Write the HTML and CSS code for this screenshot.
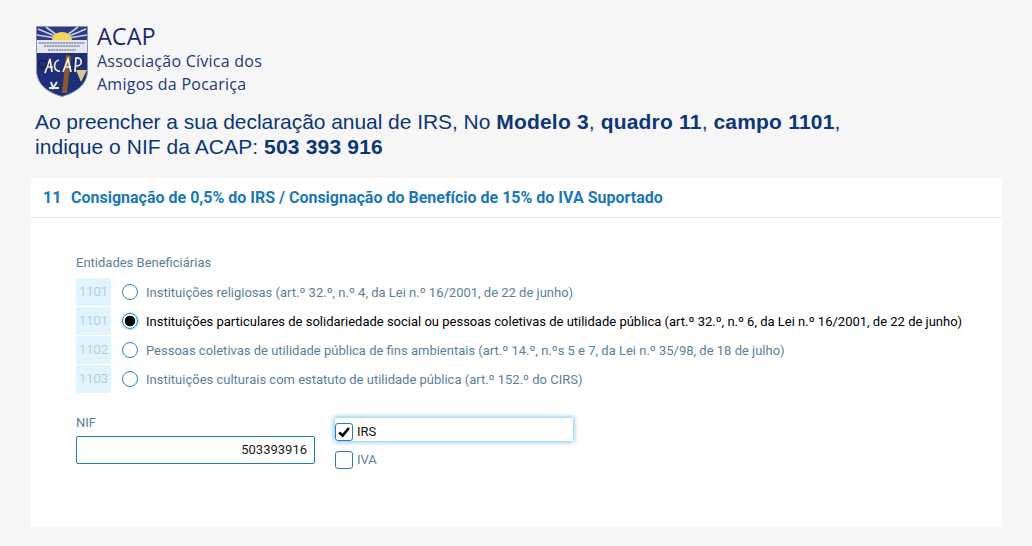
FILE: index.html
```html
<!DOCTYPE html>
<html lang="pt">
<head>
<meta charset="utf-8">
<title>ACAP</title>
<link rel="stylesheet" href="styles.css">
</head>
<body>
<header class="brand">
  <svg class="crest" viewBox="0 0 52 71" aria-hidden="true">
    <path d="M0.5 0.5H51.5V44C51.5 60 38 67 26 70.5C14 67 0.5 60 0.5 44Z" fill="#1d2f78" stroke="#8d93a8"/>
    <path d="M1 1H51V16H1Z" fill="#2a3d84"/>
    <path d="M26 13L2 3M26 13L10 1M26 13L42 1M26 13L50 3M26 13L1 9M26 13L51 9" stroke="#c9cde0" stroke-width="1.6"/>
    <path d="M16 14A10 8 0 0 1 36 14Z" fill="#f3d35a"/>
    <rect x="1" y="14" width="50" height="13" fill="#e6e7ee"/>
    <path d="M3 17H49M8 20H44M12 24H40" stroke="#4a5080" stroke-width="1.2" stroke-dasharray="2 .7"/>
    <path d="M35 30L31 67H26L30 29Z" fill="#8b5a2b"/>
    <path d="M9 47L14 33L16 46M12 41H17M23 34C17 35 17 46 24 45M27 46L32 33L35 46M29 41H35M39 46L40 32C47 31 47 40 40 40" fill="none" stroke="#f4f1de" stroke-width="1.7"/>
    <path d="M40 44H51L45 56Z" fill="#d8c98e"/>
    <circle cx="7" cy="38" r="4" fill="none" stroke="#11153a" stroke-width="1"/>
    <path d="M15 56L17 62L21 56M13 62H23" fill="none" stroke="#e9ebf3" stroke-width="2"/>
  </svg>
  <div class="brand-text">
    <div class="brand-name">ACAP</div>
    <div class="brand-sub">Associação Cívica dos</div>
    <div class="brand-sub">Amigos da Pocariça</div>
  </div>
</header>
<h1 class="notice"><span class="lead">Ao preencher a sua declaração anual de IRS, No</span> <b>Modelo 3</b>, <b>quadro 11</b>, <b>campo 1101</b>,<br>indique o NIF da ACAP: <b>503 393 916</b></h1>
<main class="card">
  <div class="card-head"><span class="num">11</span><span>Consignação de 0,5% do IRS / Consignação do Benefício de 15% do IVA Suportado</span></div>
  <div class="card-body">
    <div class="group-label">Entidades Beneficiárias</div>
    <div class="options">
      <div class="option"><span class="code">1101</span><span class="radio"></span><span>Instituições religiosas (art.º 32.º, n.º 4, da Lei n.º 16/2001, de 22 de junho)</span></div>
      <div class="option selected"><span class="code">1101</span><span class="radio"></span><span>Instituições particulares de solidariedade social ou pessoas coletivas de utilidade pública (art.º 32.º, n.º 6, da Lei n.º 16/2001, de 22 de junho)</span></div>
      <div class="option"><span class="code">1102</span><span class="radio"></span><span>Pessoas coletivas de utilidade pública de fins ambientais (art.º 14.º, n.ºs 5 e 7, da Lei n.º 35/98, de 18 de julho)</span></div>
      <div class="option"><span class="code">1103</span><span class="radio"></span><span>Instituições culturais com estatuto de utilidade pública (art.º 152.º do CIRS)</span></div>
    </div>
    <div class="fields">
      <div class="nif">
        <div class="nif-label">NIF</div>
        <div class="nif-input">503393916</div>
      </div>
      <div class="checks">
        <div class="check focused"><span class="box"><svg viewBox="0 0 18 18" aria-hidden="true"><path d="M3.5 9.5L7.5 13L14.5 4.5" fill="none" stroke="#000" stroke-width="3"/></svg></span><span>IRS</span></div>
        <div class="check"><span class="box"></span><span>IVA</span></div>
      </div>
    </div>
  </div>
</main>
</body>
</html>
```
FILE: styles.css
```css
* { box-sizing: border-box; }
html, body { height: 100%; }
body {
  margin: 0;
  padding: 24px 30px 0 31px;
  background: #f6f6f6;
  font-family: Roboto, sans-serif;
  overflow: hidden;
}
.brand { display: flex; padding: 2px 0 0 5px; height: 73px; }
.crest { width: 52px; height: 71px; flex: none; }
.brand-text {
  margin: -1px 0 0 9px;
  font-family: "Open Sans", sans-serif;
  color: #1c2a6b;
}
.brand-name { font-size: 23.5px; font-weight: 500; line-height: 22px; margin-bottom: 3px; }
.brand-sub { font-size: 16px; line-height: 23px; letter-spacing: .25px; color: #28357a; }
.notice {
  margin: 12px 0 0 4px;
  font: 400 21px/25px "Liberation Sans", sans-serif;
  letter-spacing: .06px;
  color: #0d3679;
}
.notice .lead { letter-spacing: -.05px; }
.notice b { letter-spacing: .2px; }
.card {
  margin-top: 19px;
  width: 971px;
  height: 349px;
  background: #fff;
}
.card-head {
  display: flex;
  height: 40px;
  align-items: center;
  padding: 0 12px;
  border-bottom: 1px solid #e3eef3;
  font-size: 16px;
  font-weight: 700;
  color: #1a78b8;
}
.num { width: 28px; }
.card-body { padding: 37px 0 0 45px; }
.group-label { font-size: 13px; line-height: 15px; color: #5b7f9a; }
.options { margin-top: 8px; display: flex; flex-direction: column; gap: 1px; }
.option {
  display: flex;
  align-items: center;
  height: 28px;
  font-size: 13px;
  white-space: nowrap;
  color: #5b7f9a;
}
.code {
  width: 35px;
  height: 28px;
  margin-right: 11px;
  border-radius: 2px;
  background: #e1f3fd;
  color: #9cc3da;
  font-size: 13px;
  font-weight: 300;
  text-align: center;
  line-height: 28px;
}
.radio {
  width: 16px;
  height: 16px;
  margin-right: 8px;
  border: 1.5px solid #2a86ba;
  border-radius: 50%;
  background: #fff;
}
.selected { color: #000; }
.selected .radio {
  background: radial-gradient(circle, #000 0, #000 5px, #fff 5.6px);
  box-shadow: 0 0 3px #5bb4e4;
}
.fields { display: flex; margin-top: 22px; }
.nif { width: 239px; margin-right: 20px; }
.nif-label { font-size: 13px; line-height: 15px; color: #5b7f9a; }
.nif-input {
  margin-top: 6px;
  height: 28px;
  padding: 0 7px;
  border: 1px solid #1f7fb0;
  border-radius: 2px;
  font-size: 13px;
  line-height: 26px;
  text-align: right;
  color: #1a1a1a;
}
.checks { width: 238px; margin-top: 3px; display: flex; flex-direction: column; gap: 5px; }
.check {
  display: flex;
  align-items: flex-end;
  height: 23px;
  font-size: 13px;
  line-height: 18px;
  color: #5b7f9a;
}
.check.focused {
  color: #111;
  box-shadow: 0 0 5px 1px #7cc0ea;
}
.box {
  width: 18px;
  height: 18px;
  margin-right: 4px;
  border: 1px solid #2a80b2;
  border-radius: 3px;
  background: #fff;
  flex: none;
}
.box svg { display: block; width: 16px; height: 16px; }
```
